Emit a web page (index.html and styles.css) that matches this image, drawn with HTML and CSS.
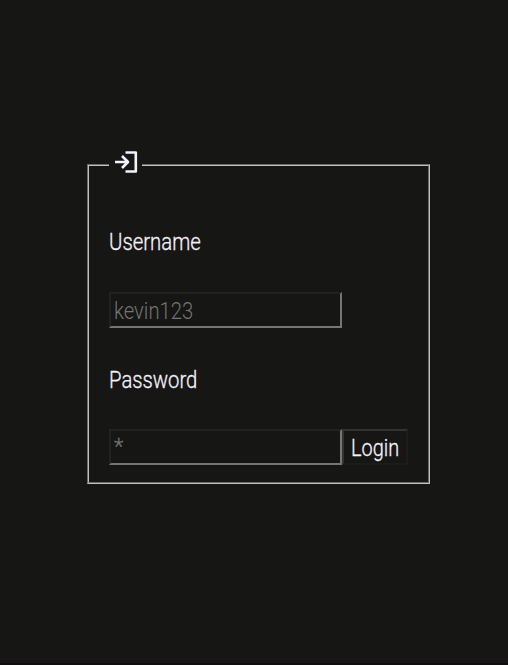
FILE: index.html
```html
<!DOCTYPE html>
<html lang="en">
<head>
<meta charset="utf-8">
<title>Login</title>
<link rel="stylesheet" href="styles.css">
</head>
<body>
<form class="panel">
  <fieldset class="box">
    <legend class="legend">
      <svg class="icon" viewBox="0 0 24 22" role="img" aria-label="Login">
        <path d="M1 11H14M8 5L14 11L8 17M11.5 1.5H21.8V20.5H11.5"/>
      </svg>
    </legend>
    <div class="label"><span class="text username">Username</span></div>
    <div class="row"><div class="field"><span class="text kevin">kevin123</span></div></div>
    <div class="label second"><span class="text password">Password</span></div>
    <div class="row last"><div class="field"><span class="text star">*</span></div><button class="button" type="button"><span class="text login">Login</span></button></div>
  </fieldset>
</form>
</body>
</html>
```
FILE: styles.css
```css
* { box-sizing: border-box; }
body {
  margin: 0;
  height: 665px;
  overflow: hidden;
  background: #161614;
  border-bottom: 2px solid #120d10;
  color: #f4f2fa;
  font: 24px/28px Roboto, sans-serif;
}
.panel { width: 343px; margin: 149px 0 0 87px; }
.box {
  height: 335px;
  margin: 0;
  padding: 0 20px;
  border: 2px groove #c0c0c0;
}
.legend { width: 33px; height: 32px; padding: 2px 5px 0; }
.icon {
  display: block;
  width: 24px;
  height: 22px;
  fill: none;
  stroke: #f4f2fa;
  stroke-width: 2.6;
  stroke-linejoin: round;
}
.label { height: 28px; margin-top: 47px; }
.second { margin-top: 38px; }
.row { display: flex; margin-top: 36px; }
.last { margin-top: 35px; }
.text {
  display: inline-block;
  transform-origin: left center;
  white-space: nowrap;
  font-weight: 300;
  -webkit-text-stroke: 0.3px currentColor;
}
.username { transform: scaleX(.848); }
.password { transform: scaleX(.845); }
.kevin { transform: translateX(1px) scaleX(.845); -webkit-text-stroke: 0; }
.star { font-size: 22px; transform: translate(1px, -2px); }
.login { transform: scaleX(.83); }
.field {
  width: 233px;
  height: 36px;
  padding: 3px 2px;
  border: 2px solid;
  border-color: #222220 #767676 #767676 #222220;
  color: #747474;
}
.button {
  width: 66px;
  height: 36px;
  padding: 2px 0 0 7px;
  border: 2px solid;
  border-color: #333331 #1c1c1a #1c1c1a #333331;
  background: #161614;
  color: inherit;
  font: inherit;
  text-align: left;
}
```
